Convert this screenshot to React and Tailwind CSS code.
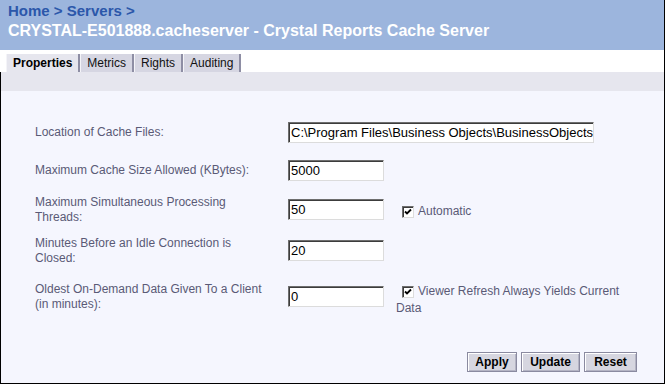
import React from 'react';

const Tab = ({ label, active }) => (
  <div
    className={
      'h-[18px] px-[6px] flex items-center text-[12px] leading-none border-l border-l-[#f4f4f8] border-r-2 border-r-[#8e8ea4] ' +
      (active ? 'bg-[#e6e6ee] font-bold text-black' : 'bg-[#d6d6e2] text-[#111]')
    }
  >
    {label}
  </div>
);

const TextBox = ({ value, width }) => (
  <input
    readOnly
    value={value}
    className={
      'h-[21px] bg-white text-[13px] text-black pl-[2px] outline-none border border-t-[#6e6e6e] border-l-[#6e6e6e] border-b-[#dcdcdc] border-r-[#dcdcdc] shadow-[inset_1px_1px_0_#3c3c3c] ' +
      width
    }
  />
);

const CheckBox = () => (
  <span className="inline-flex w-[12px] h-[12px] bg-white border border-t-[#6e6e6e] border-l-[#6e6e6e] border-b-[#dcdcdc] border-r-[#dcdcdc] shadow-[inset_1px_1px_0_#3c3c3c] align-[-1px] items-center justify-center">
    <svg width="8" height="8" viewBox="0 0 8 8">
      <path d="M1 3.5 L3 5.5 L7 1.5" stroke="#000" strokeWidth="1.8" fill="none" />
    </svg>
  </span>
);

const Button = ({ label, width }) => (
  <div
    className={
      'h-[20px] flex items-center justify-center text-[12px] font-bold text-black bg-[#d6d6e0] border border-[#8a8aa0] shadow-[inset_1px_1px_0_#ffffff,inset_-1px_-1px_0_#b4b4c4] ' +
      width
    }
  >
    {label}
  </div>
);

export default function App() {
  return (
    <div className="w-[665px] h-[384px] flex flex-col bg-white border-r border-black font-['Liberation_Sans',Arial,sans-serif]">
      <div className="h-[50px] bg-[#9cb5dd] pl-[8px] pt-[2px]">
        <div className="text-[15px] leading-[17px] font-bold text-[#2b57aa]">Home &gt; Servers &gt;</div>
        <div className="mt-[2px] text-[16px] leading-[20px] font-bold text-white">
          CRYSTAL-E501888.cacheserver - Crystal Reports Cache Server
        </div>
      </div>

      <div className="h-[22px] pt-[4px] pl-[6px] flex">
        <Tab label="Properties" active />
        <Tab label="Metrics" />
        <Tab label="Rights" />
        <Tab label="Auditing" />
      </div>
      <div className="h-[19px] bg-[#e6e6ee] border-l border-black" />

      <div className="flex-1 flex flex-col bg-[#f5f6fe] border-l border-b border-black pl-[34px] pt-[31px] text-[12px] leading-[15px] text-[#5a5a76]">
        <div className="flex items-start">
          <div className="w-[253px] pt-[3px]">Location of Cache Files:</div>
          <TextBox value="C:\Program Files\Business Objects\BusinessObjects Enterprise 11.5\Data\" width="w-[306px]" />
        </div>

        <div className="flex items-start mt-[17px]">
          <div className="w-[253px] pt-[3px]">Maximum Cache Size Allowed (KBytes):</div>
          <TextBox value="5000" width="w-[96px]" />
        </div>

        <div className="flex items-start mt-[14px]">
          <div className="w-[253px]">
            Maximum Simultaneous Processing
            <br />
            Threads:
          </div>
          <div className="mt-[4px]">
            <TextBox value="50" width="w-[96px]" />
          </div>
          <div className="ml-[12px] w-[236px] pt-[9px]">
            <span className="ml-[6px] mr-[4px]">
              <CheckBox />
            </span>
            Automatic
          </div>
        </div>

        <div className="flex items-start mt-[11px]">
          <div className="w-[253px]">
            Minutes Before an Idle Connection is
            <br />
            Closed:
          </div>
          <div className="mt-[4px]">
            <TextBox value="20" width="w-[96px]" />
          </div>
        </div>

        <div className="flex items-start mt-[16px]">
          <div className="w-[253px]">
            Oldest On-Demand Data Given To a Client
            <br />
            (in minutes):
          </div>
          <div className="mt-[4px]">
            <TextBox value="0" width="w-[96px]" />
          </div>
          <div className="ml-[12px] w-[236px] pt-[1px] leading-[17px]">
            <span className="ml-[6px] mr-[4px]">
              <CheckBox />
            </span>
            Viewer Refresh Always Yields Current Data
          </div>
        </div>

        <div className="mt-auto mb-[11px] mr-[27px] flex justify-end gap-[4px]">
          <Button label="Apply" width="w-[50px]" />
          <Button label="Update" width="w-[59px]" />
          <Button label="Reset" width="w-[53px]" />
        </div>
      </div>
    </div>
  );
}
